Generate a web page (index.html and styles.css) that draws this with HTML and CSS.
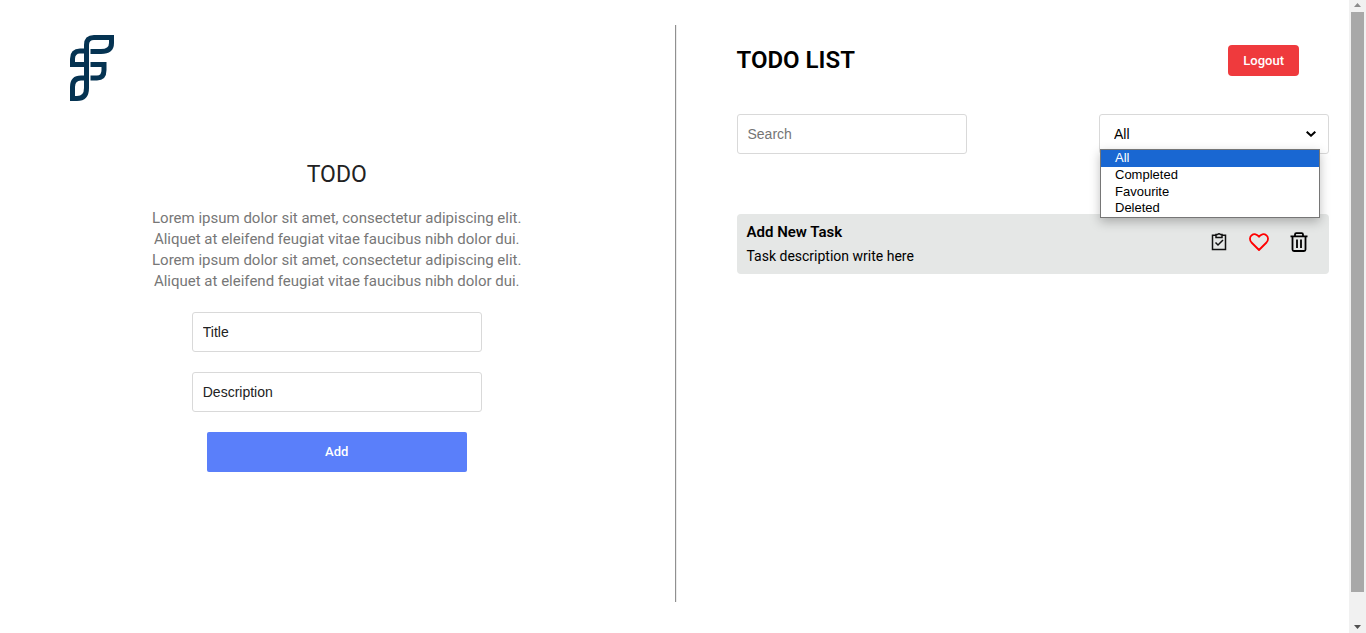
FILE: index.html
```html
<!DOCTYPE html>
<html lang="en">
<head>
<meta charset="utf-8">
<title>Todo</title>
<link rel="stylesheet" href="styles.css">
</head>
<body>
<div class="window">
  <main class="page">
    <section class="intro">
      <svg class="logo" viewBox="0 0 44 66" fill="none" stroke="#053352" stroke-width="5" aria-label="Logo" role="img">
        <path d="M20.500 16.500H31Q41.500 16.500 41.500 8V2.500H24Q16.500 2.500 16.500 10V53Q16.500 63.500 7 63.500H2.500V52Q2.500 43 11 43H14"/>
        <path d="M14 16H10Q2.500 16 2.500 24V29.500H14M20.500 29.500H34V35Q34 43 27 43H20.500"/>
      </svg>
      <div class="intro-body">
        <h1 class="intro-title">TODO</h1>
        <p class="intro-text">Lorem ipsum dolor sit amet, consectetur adipiscing elit.<br>Aliquet at eleifend feugiat vitae faucibus nibh dolor dui.<br>Lorem ipsum dolor sit amet, consectetur adipiscing elit.<br>Aliquet at eleifend feugiat vitae faucibus nibh dolor dui.</p>
        <form class="task-form">
          <input class="field" type="text" placeholder="Title" aria-label="Title">
          <input class="field" type="text" placeholder="Description" aria-label="Description">
          <button class="add" type="button">Add</button>
        </form>
      </div>
    </section>
    <div class="divider"></div>
    <section class="list">
      <header class="list-head">
        <h2 class="list-title">TODO LIST</h2>
        <button class="logout" type="button">Logout</button>
      </header>
      <div class="filters">
        <input class="field search" type="text" placeholder="Search" aria-label="Search">
        <div class="filter">
          <select class="field filter-select" aria-label="Filter tasks">
            <option>All</option>
            <option>Completed</option>
            <option>Favourite</option>
            <option>Deleted</option>
          </select>
          <svg class="chevron" viewBox="0 0 10 6" fill="none" stroke="#000" stroke-width="2"><path d="M.7.700 5 4.700 9.300.700"/></svg>
          <ul class="menu">
            <li class="menu-item selected">All</li>
            <li class="menu-item">Completed</li>
            <li class="menu-item">Favourite</li>
            <li class="menu-item">Deleted</li>
          </ul>
        </div>
      </div>
      <article class="task">
        <div>
          <h3 class="task-title">Add New Task</h3>
          <p class="task-text">Task description write here</p>
        </div>
        <div class="actions">
          <button class="action" type="button" aria-label="Complete">
            <svg viewBox="0 0 20 20" fill="none" stroke="#111" stroke-width="1.500"><path d="M7 3.200H3.500V17.500H16.500V3.200H13"/><path d="M7 2.500H8.500Q10 1 11.500 2.500H13V5.500H7Z"/><path d="M6.500 10.500 9 13 14 8"/></svg>
          </button>
          <button class="action" type="button" aria-label="Favourite">
            <svg viewBox="0 0 20 20" fill="none" stroke="#f00" stroke-width="1.800" stroke-linejoin="round"><path d="M10 18 2.500 10.500C.3 8 .6 4.700 2.700 3.200 5.200 1.300 8.200 2.200 10 4.800 11.800 2.200 14.800 1.300 17.300 3.200 19.400 4.700 19.700 8 17.500 10.500Z"/></svg>
          </button>
          <button class="action" type="button" aria-label="Delete">
            <svg viewBox="0 0 20 20" fill="none" stroke="#000" stroke-width="1.800"><path d="M1.500 4.300H18.500M6 4V2.500Q6 1.200 7.300 1.200H12.700Q14 1.200 14 2.500V4M3.500 4.500V17.500Q3.500 19 5 19H15Q16.500 19 16.500 17.500V4.500M8 7.500V16M12 7.500V16"/></svg>
          </button>
        </div>
      </article>
    </section>
  </main>
  <div class="scrollbar" aria-hidden="true">
    <svg class="arrow" viewBox="0 0 7 4" fill="#8b8b8b"><path d="M0 4 3.500 0 7 4Z"/></svg>
    <div class="track"><div class="thumb"></div></div>
    <svg class="arrow" viewBox="0 0 7 4" fill="#505050"><path d="M0 0H7L3.500 4Z"/></svg>
  </div>
</div>
</body>
</html>
```
FILE: styles.css
```css
* { box-sizing: border-box; margin: 0; padding: 0; }
body { background: #fff; font-family: Roboto, "Liberation Sans", sans-serif; color: #000; }
button { border: 0; font: inherit; cursor: pointer; }
.window { display: flex; min-height: 100vh; }
.page { flex: 1; display: grid; grid-template-columns: 1fr 2px 1fr; padding: 25px 0 31px 2px; }

.intro { padding: 10px 3px 10px 0; }
.logo { display: block; width: 44px; height: 66px; margin-left: 68px; }
.intro-body { display: flex; flex-direction: column; align-items: center; padding-top: 58px; }
.intro-title { font-size: 23px; line-height: 32px; font-weight: 400; color: #222; }
.intro-text { margin-top: 17px; font-size: 15px; line-height: 21px; color: #777; text-align: center; }
.task-form { display: flex; flex-direction: column; align-items: center; gap: 20px; margin-top: 20px; }
.field { width: 290px; height: 40px; padding: 0 10px; border: 1px solid #d9d9d9; border-radius: 3px; background: #fff; font-family: "Liberation Sans", sans-serif; font-size: 14px; color: #000; }
.field::placeholder { color: #222; opacity: 1; }
.add { width: 260px; height: 40px; padding-bottom: 1px; border-radius: 2px; background: #5a7ffa; color: #fff; font-size: 13px; font-weight: 500; }

.divider { border-left: 1px solid #909090; border-right: 1px solid #ececec; }

.list { padding: 20px 20px 0 60px; }
.list-head { display: flex; justify-content: space-between; align-items: flex-start; padding-right: 30px; }
.list-title { font-size: 24px; line-height: 30px; font-weight: 600; }
.logout { height: 31px; padding: 0 15px; border-radius: 4px; background: #ef3a3d; color: #fff; font-size: 13px; font-weight: 500; }
.filters { display: flex; justify-content: space-between; margin-top: 38px; }
.search, .filter-select { width: 230px; }
.search::placeholder { color: #757575; }
.filter { position: relative; }
.filter-select { display: block; appearance: none; padding: 0 14px; }
.chevron { position: absolute; right: 13px; top: 17px; width: 10px; height: 6px; }
.menu { position: absolute; left: 1px; top: 35px; width: 220px; height: 69px; display: grid; grid-template-rows: repeat(4, 1fr); align-items: stretch; list-style: none; border: 1px solid #767676; background: #fff; box-shadow: 0 4px 10px rgba(0, 0, 0, .25); font: 13px/15px "Liberation Sans", sans-serif; }
.menu-item { padding-left: 14px; }
.selected { background: #1967d2; color: #fff; }

.task { display: flex; justify-content: space-between; margin-top: 60px; padding: 7px 20px 7px 10px; border-radius: 4px; background: #e5e7e6; }
.task-title { font-size: 15px; line-height: 22px; font-weight: 600; }
.task-text { margin-top: 2px; font-size: 14px; line-height: 22px; }
.actions { display: flex; gap: 20px; padding-top: 11px; }
.action { width: 20px; height: 20px; background: none; }
.action svg { display: block; width: 20px; height: 20px; }

.scrollbar { flex: 0 0 17px; display: flex; flex-direction: column; align-items: center; gap: 5px; padding: 3px 0 4px; background: #f1f1f1; }
.arrow { width: 7px; height: 4px; }
.track { flex: 1; width: 13px; padding-bottom: 28px; }
.thumb { height: 100%; background: #a8a8a8; }
```
